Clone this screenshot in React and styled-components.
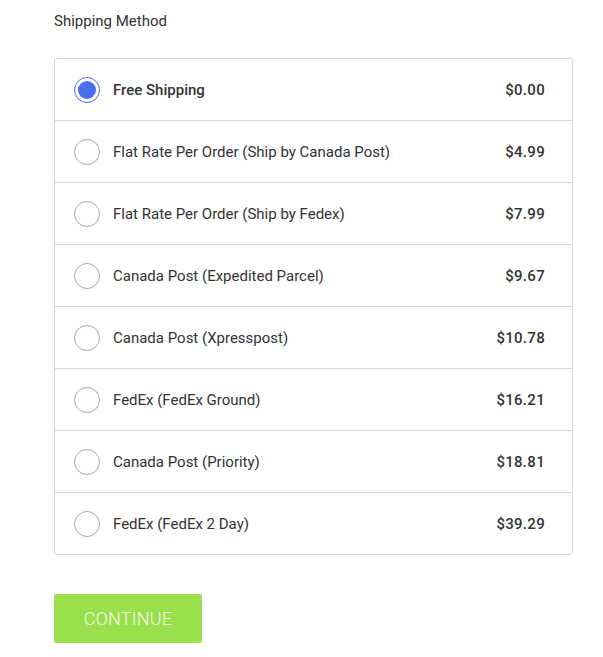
import React, { useState } from 'react';
import styled, { createGlobalStyle } from 'styled-components';

const GlobalStyle = createGlobalStyle`
  html, body {
    margin: 0;
    padding: 0;
    background: #ffffff;
    font-family: Roboto, "Liberation Sans", Arial, sans-serif;
    color: #333333;
  }
`;

const Page = styled.div`
  padding: 11px 31px 14px 54px;
`;

const Heading = styled.h3`
  margin: 0;
  font-size: 15px;
  font-weight: 400;
  color: #333;
  line-height: 20px;
`;

const List = styled.div`
  margin-top: 27px;
  border: 1px solid #d6d6d6;
  border-radius: 3px;
  width: 517px;
`;

const Row = styled.label`
  display: flex;
  align-items: center;
  height: 61px;
  padding: 0 27px 0 19px;
  border-top: ${p => (p.first ? 'none' : '1px solid #d6d6d6')};
  cursor: pointer;
`;

const Radio = styled.span`
  box-sizing: border-box;
  width: 26px;
  height: 26px;
  border-radius: 50%;
  border: 1px solid ${p => (p.checked ? '#4a6cf0' : '#a8a8a8')};
  display: flex;
  align-items: center;
  justify-content: center;
  flex-shrink: 0;

  &::after {
    content: '';
    width: 18px;
    height: 18px;
    border-radius: 50%;
    background: #4a6cf0;
    display: ${p => (p.checked ? 'block' : 'none')};
  }
`;

const Name = styled.span`
  flex: 1;
  margin-left: 13px;
  font-size: 15px;
  font-weight: ${p => (p.checked ? 500 : 400)};
  color: #333;
`;

const Price = styled.span`
  font-size: 15px;
  font-weight: 500;
  letter-spacing: 0.3px;
  color: #333;
`;

const Button = styled.button`
  margin-top: 39px;
  width: 148px;
  height: 49px;
  border: none;
  border-radius: 2px;
  background: #9ae04c;
  color: #f4fbe8;
  font-family: Roboto, "Liberation Sans", Arial, sans-serif;
  font-size: 18px;
  font-weight: 300;
  letter-spacing: 0.2px;
  cursor: pointer;
`;

const methods = [
  { name: 'Free Shipping', price: '$0.00' },
  { name: 'Flat Rate Per Order (Ship by Canada Post)', price: '$4.99' },
  { name: 'Flat Rate Per Order (Ship by Fedex)', price: '$7.99' },
  { name: 'Canada Post (Expedited Parcel)', price: '$9.67' },
  { name: 'Canada Post (Xpresspost)', price: '$10.78' },
  { name: 'FedEx (FedEx Ground)', price: '$16.21' },
  { name: 'Canada Post (Priority)', price: '$18.81' },
  { name: 'FedEx (FedEx 2 Day)', price: '$39.29' },
];

export default function App() {
  const [selected, setSelected] = useState(0);

  return (
    <Page>
      <GlobalStyle />
      <Heading>Shipping Method</Heading>
      <List>
        {methods.map((m, i) => (
          <Row key={m.name} first={i === 0} onClick={() => setSelected(i)}>
            <Radio checked={selected === i} />
            <Name checked={selected === i}>{m.name}</Name>
            <Price>{m.price}</Price>
          </Row>
        ))}
      </List>
      <Button>CONTINUE</Button>
    </Page>
  );
}
